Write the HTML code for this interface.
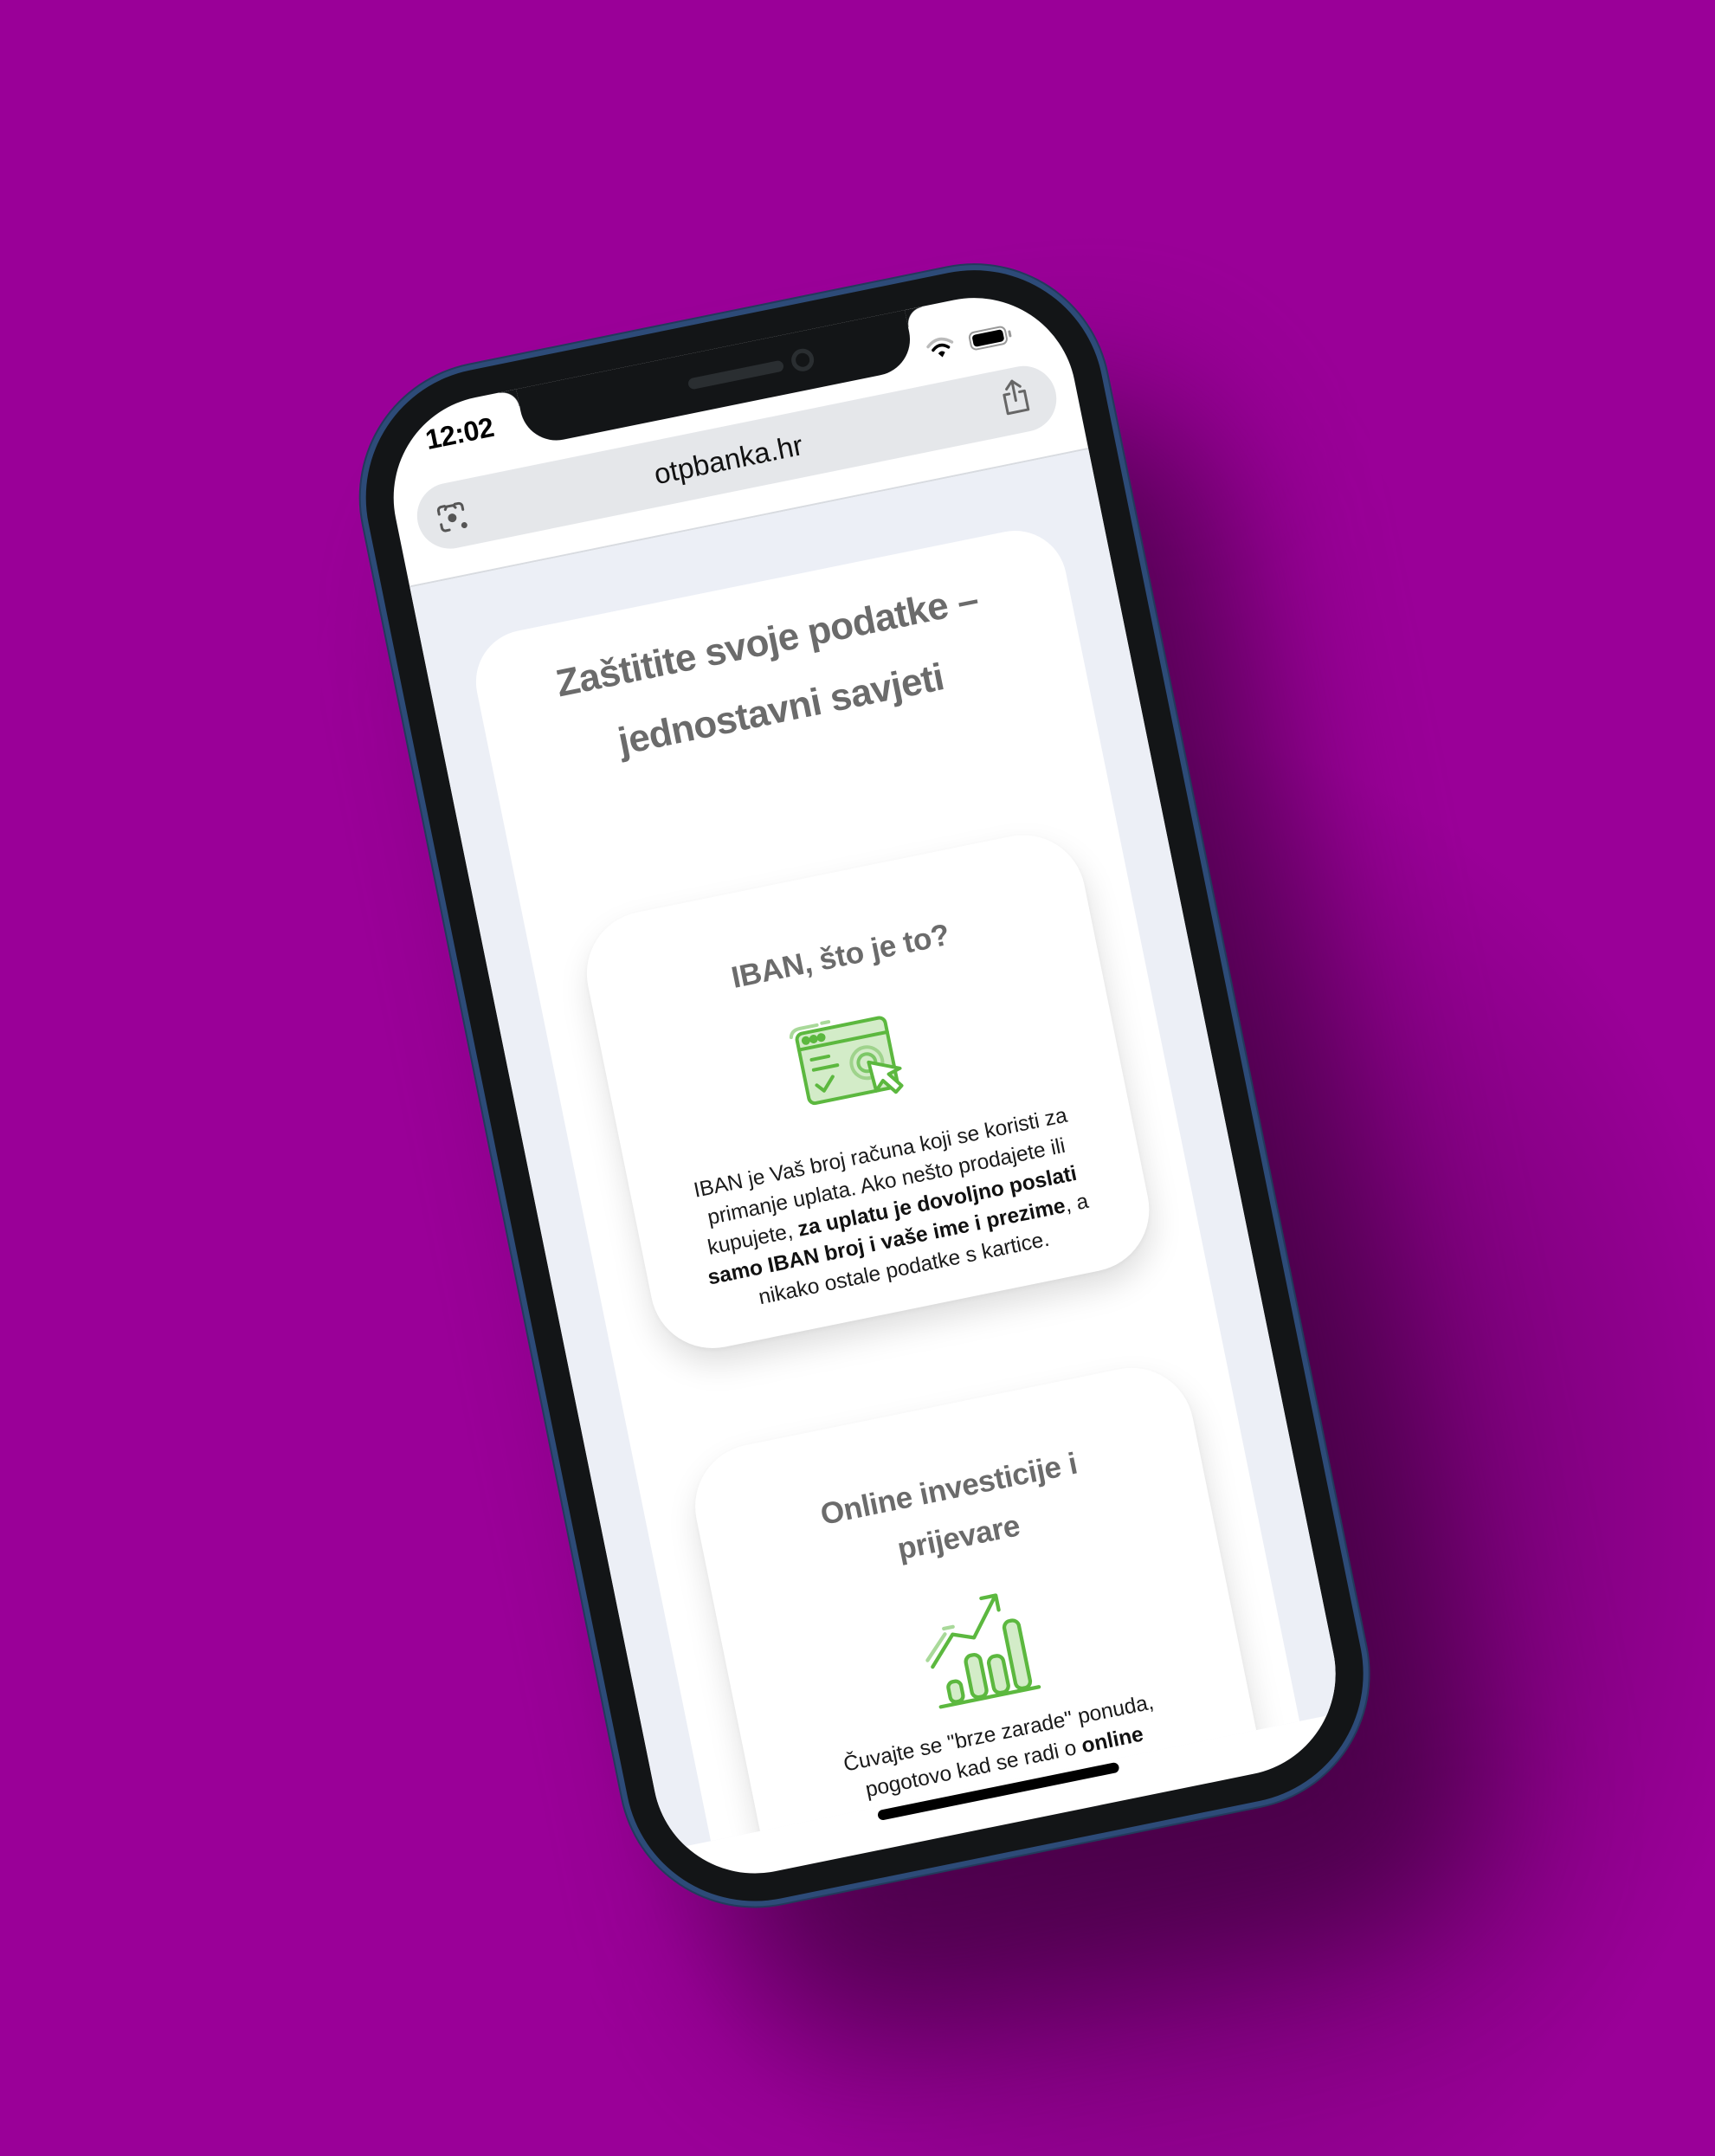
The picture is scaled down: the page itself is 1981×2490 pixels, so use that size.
<!DOCTYPE html>
<html><head><meta charset="utf-8">
<style>
html,body{margin:0;padding:0;}
body{width:1981px;height:2490px;overflow:hidden;position:relative;background:#9a0098;font-family:"Liberation Sans",sans-serif;}
.bgshade{position:absolute;left:0;top:0;width:1981px;height:2490px;background:radial-gradient(ellipse 700px 900px at 1350px 1750px,rgba(70,0,70,0.75),rgba(70,0,70,0) 100%);}
.wrap{position:absolute;left:993px;top:1231px;width:0;height:0;transform:rotate(-11.5deg);}
.shadow{position:absolute;left:-330px;top:-700px;width:864px;height:1801px;border-radius:150px;background:#3d003c;filter:blur(90px);opacity:.75;}
.phone{position:absolute;left:-431px;top:-877px;width:864px;height:1801px;border-radius:150px;background:#131517;box-shadow:0 0 0 6px #2d4b78,0 0 0 8px #233a5c;}
.screen{position:absolute;left:32px;top:32px;width:800px;height:1737px;border-radius:118px;background:#fff;overflow:hidden;}
.notch{position:absolute;left:166px;top:-10px;width:458px;height:78px;background:#131517;border-radius:0 0 42px 42px;}
.notch:before,.notch:after{content:"";position:absolute;top:10px;width:20px;height:20px;}
.notch:before{left:-20px;background:radial-gradient(circle at 0 100%,transparent 19px,#131517 20px);}
.notch:after{right:-20px;background:radial-gradient(circle at 100% 100%,transparent 19px,#131517 20px);}
.spk{position:absolute;left:196px;top:38px;width:112px;height:13px;border-radius:7px;background:#2a2e31;}
.cam{position:absolute;left:318px;top:30px;width:26px;height:26px;border-radius:50%;border:5px solid #2a2e31;box-sizing:border-box;}
.time{position:absolute;left:52px;top:19px;font-size:32px;font-weight:bold;color:#000;letter-spacing:-0.5px;}
.pill{position:absolute;left:24px;top:90px;width:752px;height:76px;border-radius:38px;background:#e5e7ea;}
.url{position:absolute;left:0;width:780px;top:110px;text-align:center;font-size:33px;color:#111;}
.sep{position:absolute;left:0;top:198px;width:800px;height:2px;background:#d8dbe0;}
.page{position:absolute;left:0;top:200px;width:800px;height:1488px;background:#eceff6;overflow:hidden;}
.big{position:absolute;left:52px;top:74px;width:694px;height:1600px;background:#fff;border-radius:60px;}
.title{position:absolute;left:0;width:784px;text-align:center;font-size:44px;font-weight:bold;color:#6b6b6b;letter-spacing:-0.6px;line-height:80px;}
.card{position:absolute;left:110px;width:585px;background:#fff;border-radius:72px;box-shadow:0 18px 36px rgba(0,0,0,0.13),0 2px 6px rgba(0,0,0,0.04);}
.ct{position:absolute;left:0;width:100%;text-align:center;font-size:35px;font-weight:bold;color:#6b6b6b;line-height:57px;letter-spacing:-0.3px;}
.tx{position:absolute;left:0;width:100%;text-align:center;font-size:24.5px;color:#1a1a1a;line-height:34px;white-space:nowrap;}
.tx b{font-weight:bold;color:#111;}
.home{position:absolute;left:247px;top:1692px;width:284px;height:12px;border-radius:6px;background:#000;}
</style></head><body>
<div class="bgshade"></div>
<div class="wrap">
<div class="shadow"></div>
<div class="phone">
<div class="screen">
  <div class="pill"></div>
  <div class="url">otpbanka.hr</div>
  <svg style="position:absolute;left:44px;top:110px" width="40" height="40" viewBox="0 0 40 40" fill="none" stroke="#555" stroke-width="3" stroke-linecap="round">
    <path d="M6 14 V10 a4 4 0 0 1 4-4 h4 M26 6 h4 a4 4 0 0 1 4 4 v4 M6 26 v4 a4 4 0 0 0 4 4 h4 M14 10 l2-3 h8 l2 3"/>
    <circle cx="20" cy="21" r="5" fill="#555" stroke="none"/>
    <circle cx="32" cy="32" r="3.5" fill="#555" stroke="none"/>
  </svg>
  <svg style="position:absolute;left:712px;top:102px" width="34" height="42" viewBox="0 0 34 42" fill="none" stroke="#666" stroke-width="3" stroke-linecap="round" stroke-linejoin="round">
    <path d="M17 3 V26 M9 11 L17 3 L25 11 M11 17 H5 V39 H29 V17 H23"/>
  </svg>
  <div class="sep"></div>
  <div class="page">
    <div class="big">
      <div class="title" style="top:30px;left:-52px">Zaštitite svoje podatke –<br>jednostavni savjeti</div>
    </div>
    <div class="card" style="top:420px;height:512px;">
      <div class="ct" style="top:68px">IBAN, što je to?</div>
      <svg style="position:absolute;left:210px;top:165px" width="150" height="100" viewBox="0 0 150 100" fill="none" stroke="#5cb83f" stroke-width="4" stroke-linecap="round" stroke-linejoin="round">
        <path d="M8 12 Q10 4 20 4 H40" stroke="#a9d99a"/><path d="M46 3 h8" stroke="#a9d99a"/>
        <rect x="14" y="10" width="104" height="82" rx="7" fill="#d3ecc8"/>
        <path d="M14 28 H118"/>
        <circle cx="24" cy="19" r="3" fill="#5cb83f"/><circle cx="33" cy="19" r="3" fill="#5cb83f"/><circle cx="42" cy="19" r="3" fill="#5cb83f"/>
        <path d="M26 42 H46 M26 54 H54 M26 72 L33 80 L46 66"/>
        <circle cx="88" cy="58" r="18" stroke="#9fd38c"/><circle cx="88" cy="58" r="10" stroke="#7cc766"/>
        <path d="M90 58 L92 92 L102 82 L114 98 L122 92 L110 76 L124 72 Z" fill="#fff"/>
      </svg>
      <div class="tx" style="top:312px">IBAN je Vaš broj računa koji se koristi za<br>primanje uplata. Ako nešto prodajete ili<br>kupujete, <b>za uplatu je dovoljno poslati</b><br><b>samo IBAN broj i vaše ime i prezime</b>, a<br>nikako ostale podatke s kartice.</div>
    </div>
    <div class="card" style="top:1048px;height:700px;">
      <div class="ct" style="top:68px">Online investicije i<br>prijevare</div>
      <svg style="position:absolute;left:222px;top:204px" width="135" height="150" viewBox="0 0 125 140" fill="none" stroke="#5cb83f" stroke-width="4" stroke-linecap="round" stroke-linejoin="round">
        <path d="M6 76 L30 52 M30 46 h10" stroke="#a9d99a"/>
        <path d="M10 84 L38 54 L60 62 L90 24 M76 22 H92 V38"/>
        <rect x="22" y="104" width="14" height="22" rx="6" fill="#d3ecc8"/>
        <rect x="46" y="80" width="16" height="46" rx="7" fill="#d3ecc8"/>
        <rect x="70" y="86" width="16" height="40" rx="7" fill="#d3ecc8"/>
        <rect x="94" y="52" width="16" height="74" rx="7" fill="#d3ecc8"/>
        <path d="M10 128 H118"/>
      </svg>
      <div class="tx" style="top:368px">Čuvajte se "brze zarade" ponuda,<br>pogotovo kad se radi o <b>online</b></div>
    </div>
  </div>
  <div class="notch"><div class="spk"></div><div class="cam"></div></div>
  <div class="time">12:02</div>
  <svg style="position:absolute;left:640px;top:38px" width="32" height="26" viewBox="0 0 32 26">
    <path d="M2 9 Q16 -3 30 9" fill="none" stroke="#bbb" stroke-width="3.5" stroke-linecap="round"/>
    <path d="M7 14 Q16 6 25 14" fill="none" stroke="#000" stroke-width="3.5" stroke-linecap="round"/>
    <path d="M12 19 Q16 15 20 19 L16 24 Z" fill="#000"/>
  </svg>
  <div style="position:absolute;left:690px;top:40px;width:44px;height:22px;border:2px solid #999;border-radius:7px;box-sizing:border-box;padding:2px;"><div style="width:100%;height:100%;background:#000;border-radius:4px"></div></div>
  <div style="position:absolute;left:736px;top:47px;width:3px;height:8px;background:#999;border-radius:2px"></div>
  <div class="home"></div>
</div>
</div>
</div>
</body></html>
